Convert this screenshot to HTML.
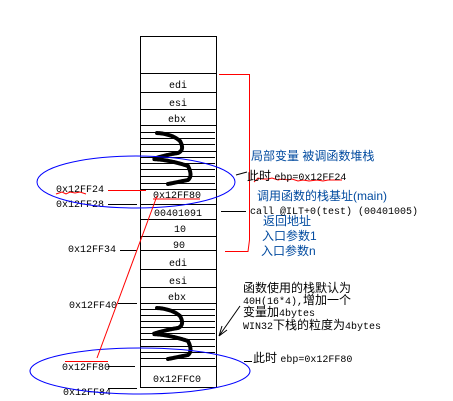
<!DOCTYPE html>
<html><head><meta charset="utf-8"><style>
html,body{margin:0;padding:0;background:#fff;width:453px;height:401px;overflow:hidden}
svg text{font-family:"Liberation Mono","Noto Sans CJK SC",monospace;font-size:10px}
.c{font-family:"Liberation Sans","Noto Sans CJK SC",sans-serif;font-size:12px}
.m{font-family:"Liberation Mono",monospace;font-size:10px}
</style></head><body>
<svg width="453" height="401" viewBox="0 0 453 401" xmlns="http://www.w3.org/2000/svg">
<rect x="140.5" y="36.5" width="76" height="351" fill="none" stroke="#000"/>
<g stroke="#000" stroke-width="1">
<line x1="140" y1="73.5" x2="216" y2="73.5"/><line x1="140" y1="92.5" x2="216" y2="92.5"/>
<line x1="140" y1="109.5" x2="216" y2="109.5"/><line x1="140" y1="125.5" x2="216" y2="125.5"/>
<line x1="140" y1="132.5" x2="215" y2="132.5"/><line x1="140" y1="138.5" x2="215" y2="138.5"/>
<line x1="140" y1="144.5" x2="215" y2="144.5"/><line x1="140" y1="151.5" x2="216" y2="151.5"/>
<line x1="140" y1="157.5" x2="215" y2="157.5"/><line x1="140" y1="163.5" x2="215" y2="163.5"/>
<line x1="140" y1="169.5" x2="215" y2="169.5"/><line x1="140" y1="176.5" x2="215" y2="176.5"/>
<line x1="140" y1="183.5" x2="215" y2="183.5"/><line x1="140" y1="189.5" x2="216" y2="189.5"/>
<line x1="140" y1="204.5" x2="216" y2="204.5"/><line x1="140" y1="219.5" x2="216" y2="219.5"/>
<line x1="140" y1="236.5" x2="216" y2="236.5"/><line x1="140" y1="250.5" x2="216" y2="250.5"/>
<line x1="140" y1="269.5" x2="216" y2="269.5"/><line x1="140" y1="287.5" x2="216" y2="287.5"/>
<line x1="140" y1="303.5" x2="216" y2="303.5"/><line x1="140" y1="309.5" x2="215" y2="309.5"/>
<line x1="140" y1="315.5" x2="215" y2="315.5"/><line x1="140" y1="321.5" x2="215" y2="321.5"/>
<line x1="140" y1="327.5" x2="215" y2="327.5"/><line x1="140" y1="333.5" x2="215" y2="333.5"/>
<line x1="140" y1="339.5" x2="215" y2="339.5"/><line x1="140" y1="346.5" x2="215" y2="346.5"/>
<line x1="140" y1="352.5" x2="215" y2="352.5"/><line x1="140" y1="358.5" x2="215" y2="358.5"/>
<line x1="140" y1="366.5" x2="216" y2="366.5"/>
</g>
<g fill="none" stroke="#000" stroke-width="4" stroke-linecap="round" stroke-dasharray="2 1">
<path d="M157 133 Q172 134 180 141 Q185 150 178 153 Q165 155 153 159 Q170 160 188 166 Q193 176 188 180 Q178 182 168 184"/>
<path d="M157 308 Q172 309 180 316 Q185 325 178 328 Q165 330 153 334 Q170 335 188 341 Q193 351 188 355 Q178 357 168 359"/>
</g>
<g text-anchor="middle" fill="#000">
<text x="178" y="88">edi</text><text x="178" y="106">esi</text><text x="177" y="122">ebx</text>
<text x="177" y="198">0x12FF80</text><text x="178" y="216">00401091</text>
<text x="180" y="232">10</text><text x="179" y="248">90</text>
<text x="178" y="266">edi</text><text x="178" y="284">esi</text><text x="177" y="300">ebx</text>
<text x="177" y="382">0x12FFC0</text>
</g>
<g fill="#000">
<text x="56" y="192">0x12FF24</text><text x="56" y="207">0x12FF28</text>
<text x="68" y="252">0x12FF34</text><text x="69" y="308">0x12FF40</text>
<text x="62" y="370">0x12FF80</text><text x="63" y="395">0x12FF84</text>
</g>
<g stroke="#000"><line x1="108" y1="204.5" x2="137" y2="204.5"/><line x1="120" y1="250.5" x2="137" y2="250.5"/>
<line x1="118" y1="303.5" x2="137" y2="303.5"/><line x1="108" y1="366.5" x2="135" y2="366.5"/>
<line x1="108" y1="388.5" x2="137" y2="388.5"/><line x1="221" y1="211.5" x2="246" y2="211.5"/>
<line x1="236" y1="175" x2="247" y2="172"/><line x1="244" y1="361.5" x2="252" y2="361.5"/>
<path d="M240 306 L219 336 M219 336 L222 326 M219 336 L227 330" fill="none"/></g>
<ellipse cx="136" cy="182" rx="99" ry="26" fill="none" stroke="#00f"/>
<ellipse cx="140" cy="371" rx="110" ry="23" fill="none" stroke="#00f"/>
<g stroke="#f00" fill="none">
<path d="M219 74.5 H249.5 V240 L248 251.5 H225"/>
<line x1="108" y1="190.5" x2="146" y2="190.5"/>
<line x1="157" y1="196" x2="97" y2="358"/>
<line x1="65" y1="361.5" x2="108" y2="361.5"/>
<path d="M56 194 l6 -2 4 2 4 -2 5 1 5 -1 6 2"/>
<path d="M153 199 h47"/>
<path d="M254 182 l4 -4 4 1 6 0 4 -1 6 2 4 -1 6 1 4 -1 6 2 5 -1 6 1 8 -1 6 1 5 -1 8 0 6 0"/>
</g>
<g fill="#004a9f">
<text class="c" x="251" y="160">局部变量 被调函数堆栈</text>
<text class="c" x="257" y="200">调用函数的栈基址(main)</text>
<text class="c" x="263" y="225">返回地址</text>
<text class="c" x="262" y="240">入口参数1</text>
<text class="c" x="261" y="255">入口参数n</text>
</g>
<g fill="#000">
<text x="247" y="180" class="c">此时 <tspan class="m">ebp=0x12FF24</tspan></text>
<text x="250" y="214">call @ILT+0(test) (00401005)</text>
<text x="243" y="292" class="c">函数使用的栈默认为</text>
<text x="243" y="304">40H(16*4),<tspan class="c">增加一个</tspan></text>
<text x="243" y="316" class="c">变量加<tspan class="m">4bytes</tspan></text>
<text x="243" y="329">WIN32<tspan class="c">下栈的粒度为</tspan>4bytes</text>
<text x="253" y="362" class="c">此时 <tspan class="m">ebp=0x12FF80</tspan></text>
</g>
</svg>
</body></html>
